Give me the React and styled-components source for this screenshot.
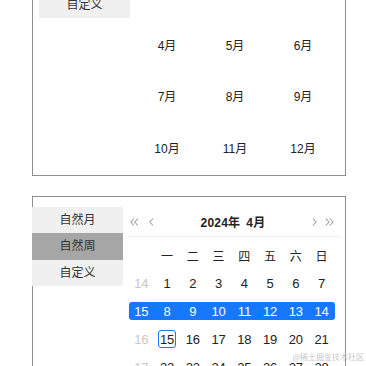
import styled, { createGlobalStyle } from 'styled-components';

const GlobalStyle = createGlobalStyle`
  html, body {
    margin: 0;
    background: #fff;
    overflow: hidden;
  }
  body {
    font-family: "Liberation Sans", "Noto Sans CJK SC", sans-serif;
    color: #222;
  }
`;

// page is scrolled down in the reference, so the first card starts above the window
const Page = styled.div`
  margin-top: -72px;
  padding-left: 32px;
  width: 314px;
  display: flex;
  flex-direction: column;
  gap: 20px;
`;

const Card = styled.div`
  border: 1px solid #8f8f8f;
  display: flex;
  align-items: flex-start;
  padding: ${p => p.$pad};
`;

const Sidebar = styled.div`
  width: 91px;
  flex-shrink: 0;
  margin-left: ${p => p.$shift || 0}px;
  position: relative;
`;

const MenuItem = styled.div`
  height: 26.3px;
  line-height: 26px;
  text-align: center;
  font-size: 12px;
  color: #333;
  background: ${p => (p.$active ? '#a6a6a6' : '#f0f0f0')};
`;

const MonthPanel = styled.div`
  flex: 1;
  padding-left: 3px;
`;

const PanelHeader = styled.div`
  height: ${p => p.$h}px;
  display: flex;
  align-items: center;
  padding: 0 6px 0 2px;
  border-bottom: 1px solid #f0f0f0;
`;

const Title = styled.div`
  flex: 1;
  text-align: center;
  font-size: 12px;
  font-weight: bold;
  color: #222;
  letter-spacing: 0.2px;

  span + span {
    margin-left: 6px;
  }
`;

const NavGroup = styled.div`
  display: flex;
  align-items: center;
  gap: ${p => p.$gap}px;
  color: #a0a0a0;
`;

const MonthGrid = styled.div`
  display: grid;
  grid-template-columns: repeat(3, 68px);
  grid-auto-rows: 51.5px;
`;

const MonthCell = styled.div`
  display: flex;
  align-items: center;
  justify-content: center;
  font-size: 12px;
  color: #222;
`;

const DatePanel = styled.div`
  width: 212px;
  margin-left: 5px;
`;

const Weeks = styled.div`
  padding-top: 4px;
  width: 206px;
  margin-left: 0.5px;
`;

const WeekRow = styled.div`
  height: 28px;
  display: flex;
  align-items: center;
`;

const WeekCells = styled.div`
  flex: 1;
  height: 18px;
  display: grid;
  grid-template-columns: repeat(8, 1fr);
  align-items: center;
  border-radius: 3px;
  background: ${p => (p.$selected ? '#1677ff' : 'transparent')};
  color: ${p => (p.$selected ? '#fff' : '#222')};
`;

const Cell = styled.div`
  display: flex;
  justify-content: center;
  align-items: center;
  font-size: ${p => (p.$head ? 12 : 13)}px;
  color: ${p => (p.$muted ? '#c8c8c8' : 'inherit')};
`;

const Today = styled.span`
  width: 16px;
  height: 16px;
  border: 1px solid #1677ff;
  border-radius: 3px;
  display: inline-flex;
  align-items: center;
  justify-content: center;
`;

const Watermark = styled.div`
  position: fixed;
  right: 2px;
  bottom: 4px;
  font-size: 8px;
  color: #c4c4c4;
  font-family: "Noto Sans CJK SC", sans-serif;
`;

const Chevron = ({ dir = 'left', double }) => {
  const pts = dir === 'left' ? ['4,0.5 0.8,4 4,7.5', '8,0.5 4.8,4 8,7.5'] : ['0.8,0.5 4,4 0.8,7.5', '4.8,0.5 8,4 4.8,7.5'];
  const list = double ? pts : [dir === 'left' ? pts[0] : pts[0]];
  return (
    <svg width={double ? 9 : 5} height="8" viewBox={`0 0 ${double ? 9 : 5} 8`} fill="none">
      {list.map(p => (
        <polyline key={p} points={p} stroke="currentColor" strokeWidth="1.1" />
      ))}
    </svg>
  );
};

const menus = ['自然月', '自然周', '自定义'];
const months = ['1月', '2月', '3月', '4月', '5月', '6月', '7月', '8月', '9月', '10月', '11月', '12月'];
const weekdays = ['', '一', '二', '三', '四', '五', '六', '日'];
const weeks = [
  { no: 14, days: [1, 2, 3, 4, 5, 6, 7] },
  { no: 15, days: [8, 9, 10, 11, 12, 13, 14], selected: true },
  { no: 16, days: [15, 16, 17, 18, 19, 20, 21], today: 15 },
  { no: 17, days: [22, 23, 24, 25, 26, 27, 28] },
];

const App = () => {
  return (
    <>
      <GlobalStyle />
      <Page>
        <Card $pad="10px 0 2px 6px">
          <Sidebar>
            {menus.map((m, i) => (
              <MenuItem key={m} $active={i === 0}>{m}</MenuItem>
            ))}
          </Sidebar>
          <MonthPanel>
            <PanelHeader $h={27}>
              <NavGroup $gap={10}><Chevron double /></NavGroup>
              <Title><span>2024年</span></Title>
              <NavGroup $gap={10}><Chevron dir="right" double /></NavGroup>
            </PanelHeader>
            <MonthGrid>
              {months.map(m => (
                <MonthCell key={m}>{m}</MonthCell>
              ))}
            </MonthGrid>
          </MonthPanel>
        </Card>

        <Card $pad="10px 0 40px 0">
          <Sidebar $shift={-1}>
            {menus.map((m, i) => (
              <MenuItem key={m} $active={i === 1}>{m}</MenuItem>
            ))}
          </Sidebar>
          <DatePanel>
            <PanelHeader $h={29}>
              <NavGroup $gap={10}>
                <Chevron double />
                <Chevron />
              </NavGroup>
              <Title><span>2024年</span><span>4月</span></Title>
              <NavGroup $gap={8}>
                <Chevron dir="right" />
                <Chevron dir="right" double />
              </NavGroup>
            </PanelHeader>
            <Weeks>
              <WeekRow>
                <WeekCells>
                  {weekdays.map((d, i) => (
                    <Cell key={i} $head>{d}</Cell>
                  ))}
                </WeekCells>
              </WeekRow>
              {weeks.map(w => (
                <WeekRow key={w.no}>
                  <WeekCells $selected={w.selected}>
                    <Cell $muted={!w.selected}>{w.no}</Cell>
                    {w.days.map(d => (
                      <Cell key={d}>{w.today === d ? <Today>{d}</Today> : d}</Cell>
                    ))}
                  </WeekCells>
                </WeekRow>
              ))}
            </Weeks>
          </DatePanel>
        </Card>
      </Page>
      <Watermark>@稀土掘金技术社区</Watermark>
    </>
  );
};

export default App;
